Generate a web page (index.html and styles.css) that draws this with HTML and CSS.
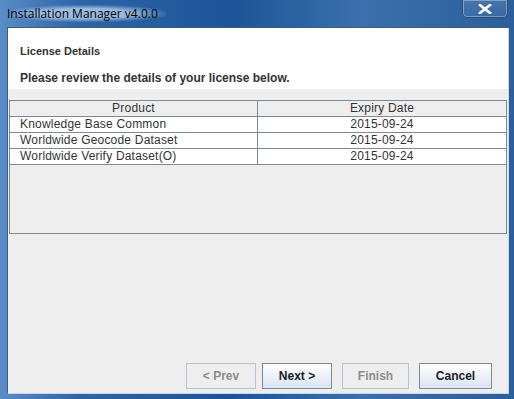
FILE: index.html
```html
<!DOCTYPE html>
<html>
<head>
<meta name="viewport" content="width=device-width, initial-scale=1.0">
<link rel="stylesheet" href="styles.css">
</head>
<body>
<div class="window">
  <div class="titlebar">
    <span class="title">Installation Manager v4.0.0</span>
    <div class="close"><svg width="14" height="10" viewBox="0 0 14 10"><path d="M2 1 L12 9 M12 1 L2 9" stroke="#fff" stroke-width="2.6" stroke-linecap="square"/></svg></div>
  </div>
  <div class="client">
    <div class="header">
      <div class="heading">License Details</div>
      <div class="intro">Please review the details of your license below.</div>
    </div>
    <div class="content">
      <div class="table">
        <div class="row head"><div class="c1">Product</div><div class="c2">Expiry Date</div></div>
        <div class="row"><div class="c1 left">Knowledge Base Common</div><div class="c2">2015-09-24</div></div>
        <div class="row"><div class="c1 left">Worldwide Geocode Dataset</div><div class="c2">2015-09-24</div></div>
        <div class="row"><div class="c1 left">Worldwide Verify Dataset(O)</div><div class="c2">2015-09-24</div></div>
      </div>
      <div class="buttons">
        <button class="btn off prev">&lt; Prev</button>
        <button class="btn next">Next &gt;</button>
        <button class="btn off finish">Finish</button>
        <button class="btn cancel">Cancel</button>
      </div>
    </div>
  </div>
</div>
</body>
</html>
```
FILE: styles.css
```css
body, html {
  margin:0;
  padding:0;
}

.window {
  width:514px;
  height:399px;
  box-sizing:border-box;
  padding:0 6px 6px 8px;
  display:flex;
  flex-direction:column;
  background:linear-gradient(90deg, #5a8cc6 0%, #2d66a8 15%, #1b5597 45%, #3a70ad 70%, #2b5f9c 100%);
}

.titlebar {
  height:27px;
  display:flex;
  align-items:flex-start;
  justify-content:space-between;
  margin-left:-1px;
}

.title {
  font-family:"Open Sans", sans-serif;
  font-size:12px;
  color:#000;
  margin-top:5px;
  padding:0 8px 0 0;
  border-radius:8px;
  background:radial-gradient(ellipse at center, rgba(190,215,240,0.75) 40%, rgba(190,215,240,0) 75%);
}

.close {
  width:46px;
  height:18px;
  margin-right:0;
  box-sizing:border-box;
  border:1px solid #2f4c72;
  border-top:none;
  border-radius:0 0 5px 5px;
  background:linear-gradient(rgba(255,255,255,0.12), rgba(255,255,255,0.05));
  box-shadow:inset 0 0 0 1px rgba(200,220,240,0.45);
  display:flex;
  align-items:center;
  justify-content:center;
}

.client {
  flex:1;
  display:flex;
  flex-direction:column;
  background:#eeeeee;
  border-top:1px solid #3b5d83;
  border-left:1px solid #3b5d83;
  margin-left:-1px;
  box-shadow:1px 1px 0 #c9d8e8;
  font-family:"Liberation Sans", Arial, sans-serif;
}

.header {
  background:#fff;
  height:61px;
  padding:0 12px;
  box-sizing:border-box;
  color:#333;
}

.heading {
  font-weight:bold;
  font-size:11px;
  padding-top:17px;
}

.intro {
  font-weight:bold;
  font-size:12px;
  margin-top:14px;
}

.content {
  flex:1;
  display:flex;
  flex-direction:column;
  padding:11px 1px 4px 1px;
}

.table {
  height:134px;
  border:1px solid #7a8a99;
  box-sizing:border-box;
}

.row {
  display:flex;
  height:16px;
  background:#fff;
  border-bottom:1px solid #7a8a99;
  box-sizing:border-box;
  font-size:12px;
  letter-spacing:0.2px;
  color:#333;
  line-height:15px;
}

.row.head {
  background:#eeeeee;
}

.c1 {
  width:247px;
  border-right:1px solid #7a8a99;
  text-align:center;
}

.c1.left {
  text-align:left;
  padding-left:10px;
  width:237px;
}

.c2 {
  flex:1;
  text-align:center;
}

.buttons {
  margin-top:auto;
  display:flex;
  justify-content:flex-end;
  padding-right:15px;
}

.btn {
  height:26px;
  border:1px solid #7a8a99;
  background:linear-gradient(#ffffff, #d9e5f2);
  font-family:"Liberation Sans", Arial, sans-serif;
  font-weight:bold;
  font-size:12px;
  color:#222;
  padding:0;
  margin-left:6px;
}

.btn.off {
  border-color:#b8c4d0;
  background:#eeeeee;
  color:#8d8d8d;
}

.prev { width:70px; }
.next { width:70px; }
.finish { width:67px; margin-left:10px; }
.cancel { width:73px; margin-left:10px; }
```
